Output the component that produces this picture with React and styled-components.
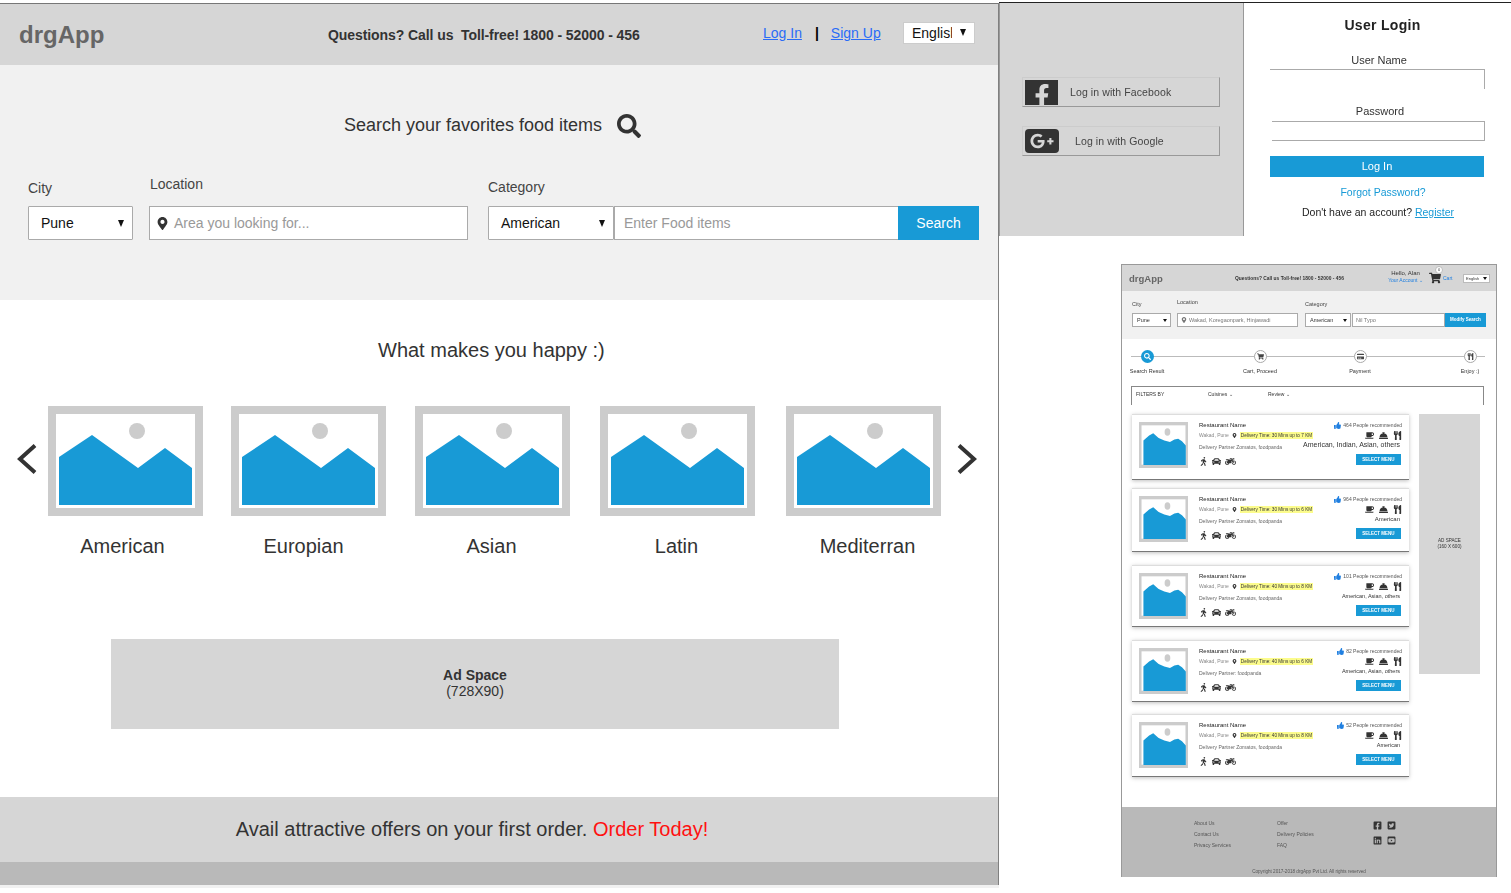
import styled, { createGlobalStyle } from "styled-components";
import {
  FaSearch, FaMapMarkerAlt, FaFacebookF, FaGooglePlusG,
  FaThumbsUp, FaWalking, FaCar, FaMotorcycle, FaCoffee, FaConciergeBell, FaUtensils,
  FaShoppingCart, FaCreditCard, FaFacebookSquare, FaTwitterSquare, FaLinkedin, FaYoutubeSquare,
} from "react-icons/fa";

const GlobalStyle = createGlobalStyle`
  html, body { margin: 0; padding: 0; background: #fff; }
  body { font-family: "Liberation Sans", Arial, sans-serif; color: #333; width: 1511px; height: 893px; overflow: hidden; }
`;

const categories = [
  { name: "American", left: 0, shift: -3 },
  { name: "Europian", left: 28, shift: -5 },
  { name: "Asian", left: 29, shift: -1 },
  { name: "Latin", left: 30, shift: -1 },
  { name: "Mediterran", left: 31, shift: 4 },
];

const restaurants = [
  { count: "464 People recommended", cuisine: "American, Indian, Asian, others", time: "Delivery Time: 30 Mins up to 7 KM", partner: "Delivery Partner Zomatos, foodpanda", height: 66, top: 0, cuisineSize: 7 },
  { count: "964 People recommended", cuisine: "American", time: "Delivery Time: 30 Mins up to 6 KM", partner: "Delivery Partner Zomatos, foodpanda", height: 64, top: 8, cuisineSize: 6 },
  { count: "101 People recommended", cuisine: "American, Asian, others", time: "Delivery Time: 40 Mins up to 8 KM", partner: "Delivery Partner Zomatos, foodpanda", height: 62, top: 13, cuisineSize: 5.5 },
  { count: "82 People recommended", cuisine: "American, Asian, others", time: "Delivery Time: 40 Mins up to 6 KM", partner: "Delivery Partner: foodpanda", height: 62, top: 13, cuisineSize: 5.5 },
  { count: "52 People recommended", cuisine: "American", time: "Delivery Time: 40 Mins up to 8 KM", partner: "Delivery Partner Zomatos, foodpanda", height: 63, top: 12, cuisineSize: 5.5 },
];

const steps = [
  { label: "Search Result", Icon: FaSearch, on: true, left: 0 },
  { label: "Cart, Proceed", Icon: FaShoppingCart, left: 79 },
  { label: "Payment", Icon: FaCreditCard, left: 66 },
  { label: "Enjoy :)", Icon: FaUtensils, left: 76 },
];

function Placeholder({ small }) {
  return (
    <svg viewBox="0 0 155 110" width="100%" height="100%" preserveAspectRatio="none">
      <rect width="155" height="110" fill="#cccccc" />
      <rect x="8" y="8" width="139" height="94" fill="#fff" />
      <circle cx={small ? 90 : 89} cy={small ? 24 : 25} r={small ? 9 : 8} fill="#cccccc" />
      <path
        d={small
          ? "M14 44 L32 32 L45 27 L62 38 L80 44 L98 48 L112 42 L124 40 L136 46 L148 56 V103 H14 Z"
          : "M11 51 L44 29 L90 62 L117 42 L144 62 V99 H11 Z"}
        fill="#189ad6"
      />
    </svg>
  );
}

function Chevron({ right }) {
  return (
    <svg width="20" height="30" viewBox="0 0 20 30" fill="none" stroke="#333" strokeWidth="4">
      <path d={right ? "M2 1.5 L17 15 L2 28.5" : "M18 1.5 L3 15 L18 28.5"} />
    </svg>
  );
}

export default function App() {
  return (
    <>
      <GlobalStyle />
      <Page>
        <Landing>
          <TopBar>
            <Logo>drgApp</Logo>
            <Phone>Questions? Call us&nbsp; Toll-free! 1800 - 52000 - 456</Phone>
            <TopLinks>
              <a href="#login">Log In</a>
              <Pipe>|</Pipe>
              <a href="#signup">Sign Up</a>
            </TopLinks>
            <LangBox>
              <LangText>English</LangText>
              <Caret />
            </LangBox>
          </TopBar>

          <Hero>
            <HeroTitle>
              Search your favorites food items
              <FaSearch size={24} />
            </HeroTitle>
            <SearchRow>
              <Field $width={105} $gap={16}>
                <FieldLabel $bottom={10}>City</FieldLabel>
                <SelectBox>Pune<Caret /></SelectBox>
              </Field>
              <Field $width={319} $gap={20}>
                <FieldLabel $bottom={14} $indent={1}>Location</FieldLabel>
                <InputBox>
                  <FaMapMarkerAlt size={13} color="#333" />
                  <Hint>Area you looking for...</Hint>
                </InputBox>
              </Field>
              <Field $width={126} $gap={0}>
                <FieldLabel $bottom={11}>Category</FieldLabel>
                <SelectBox>American<Caret /></SelectBox>
              </Field>
              <FoodInput><Hint>Enter Food items</Hint></FoodInput>
              <SearchButton>Search</SearchButton>
            </SearchRow>
          </Hero>

          <Happy>
            <HappyTitle>What makes you happy :)</HappyTitle>
            <Carousel>
              <Chevron />
              <Thumbs>
                {categories.map((c) => (
                  <Thumb key={c.name} $left={c.left}>
                    <ThumbImage><Placeholder /></ThumbImage>
                    <ThumbName $shift={c.shift}>{c.name}</ThumbName>
                  </Thumb>
                ))}
              </Thumbs>
              <Chevron right />
            </Carousel>
            <AdBanner>
              <strong>Ad Space</strong>
              <span>(728X90)</span>
            </AdBanner>
          </Happy>

          <Promo>Avail attractive offers on your first order.&nbsp;<b>Order Today!</b></Promo>
          <BottomStrip />
        </Landing>

        <SideColumn>
          <LoginPanel>
            <SocialSide>
              <SocialButton>
                <FbIcon><FaFacebookF size={24} color="#d6d6d6" /></FbIcon>
                <span>Log in with Facebook</span>
              </SocialButton>
              <SocialButton $lower>
                <GoogleIcon><FaGooglePlusG size={24} color="#d6d6d6" /></GoogleIcon>
                <span>Log in with Google</span>
              </SocialButton>
            </SocialSide>
            <LoginForm>
              <LoginTitle>User Login</LoginTitle>
              <LoginLabel $top={20}>User Name</LoginLabel>
              <LoginInput $open />
              <LoginLabel $top={16} $indent={1}>Password</LoginLabel>
              <LoginInput />
              <LoginButton>Log In</LoginButton>
              <Forgot>Forgot Password?</Forgot>
              <Signup>Don't have an account? <a href="#register">Register</a></Signup>
            </LoginForm>
          </LoginPanel>

          <Mini>
            <MiniHeader>
              <MiniLogo>drgApp</MiniLogo>
              <MiniPhone>Questions? Call us Toll-free! 1800 - 52000 - 456</MiniPhone>
              <MiniUser>Hello, Alan<small>Your Account ⌄</small></MiniUser>
              <MiniCart>
                <FaShoppingCart size={12} color="#333" />
                <CartBadge>0</CartBadge>
                <span>Cart</span>
              </MiniCart>
              <MiniLang>English<Caret $tiny /></MiniLang>
            </MiniHeader>

            <MiniSearch>
              <MiniField $width={39} $gap={6} $bottom={6}>
                <label>City</label>
                <MiniSelect>Pune<Caret $tiny /></MiniSelect>
              </MiniField>
              <MiniField $width={121} $gap={7} $bottom={8}>
                <label>Location</label>
                <MiniInput><FaMapMarkerAlt size={6} />Wakad, Koregaonpark, Hinjawadi</MiniInput>
              </MiniField>
              <MiniField $width={46} $gap={1} $bottom={6}>
                <label>Category</label>
                <MiniSelect>American<Caret $tiny /></MiniSelect>
              </MiniField>
              <MiniInput $food>Nil Typo</MiniInput>
              <MiniSearchBtn>Modify Search</MiniSearchBtn>
            </MiniSearch>

            <Steps>
              {steps.map(({ label, Icon, on, left }) => (
                <Step key={label} $left={left}>
                  <StepDot $on={on}><Icon size={7} /></StepDot>
                  <StepLabel>{label}</StepLabel>
                </Step>
              ))}
            </Steps>

            <FilterBar>
              <span>FILTERS BY</span>
              <span>Cuisines ⌄</span>
              <span>Review ⌄</span>
            </FilterBar>

            <MiniBody>
              <CardList>
                {restaurants.map((r) => (
                  <Card key={r.count} $height={r.height} $top={r.top}>
                    <CardThumb><Placeholder small /></CardThumb>
                    <CardInfo>
                      <CardName>Restaurant Name</CardName>
                      <CardPlace>
                        Wakad, Pune <FaMapMarkerAlt size={5} color="#333" />
                        <Highlight>{r.time}</Highlight>
                      </CardPlace>
                      <CardPartner>{r.partner}</CardPartner>
                      <IconRow>
                        <FaWalking size={9} /><FaCar size={9} /><FaMotorcycle size={11} />
                      </IconRow>
                    </CardInfo>
                    <CardSide>
                      <Recommend><FaThumbsUp size={7} color="#1f7fe0" />{r.count}</Recommend>
                      <IconRow $end>
                        <FaCoffee size={9} /><FaConciergeBell size={9} /><FaUtensils size={9} />
                      </IconRow>
                      <Cuisine $size={r.cuisineSize}>{r.cuisine}</Cuisine>
                      <SelectMenu>SELECT MENU</SelectMenu>
                    </CardSide>
                  </Card>
                ))}
              </CardList>
              <Skyscraper>
                <span>AD SPACE</span>
                <span>(160 X 600)</span>
              </Skyscraper>
            </MiniBody>

            <MiniFooter>
              <FooterColumns>
                <FooterLinks>
                  <span>About Us</span><span>Contact Us</span><span>Privacy Services</span>
                </FooterLinks>
                <FooterLinks>
                  <span>Offer</span><span>Delivery Policies</span><span>FAQ</span>
                </FooterLinks>
                <SocialGrid>
                  <FaFacebookSquare size={9} /><FaTwitterSquare size={9} />
                  <FaLinkedin size={9} /><FaYoutubeSquare size={9} />
                </SocialGrid>
              </FooterColumns>
              <Copyright>Copyright 2017-2018 drgApp Pvt Ltd. All rights reserved</Copyright>
            </MiniFooter>
          </Mini>
        </SideColumn>
      </Page>
    </>
  );
}

const Page = styled.div`
  display: flex;
  align-items: flex-start;
  width: 1511px;
  height: 893px;
  overflow: hidden;
`;

const Landing = styled.main`
  width: 998px;
  height: 881px;
  margin-top: 3px;
  border-top: 1px solid #777;
  border-right: 1px solid #808080;
  display: flex;
  flex-direction: column;
  box-shadow: 0 3px 0 #f1f1f1;
  flex: none;
`;

const TopBar = styled.header`
  height: 61px;
  flex: none;
  background: #d6d6d6;
  display: flex;
  align-items: center;
  padding-left: 19px;
`;

const Logo = styled.div`
  width: 309px;
  font-size: 24px;
  font-weight: 700;
  color: #666;
`;

const Phone = styled.div`
  width: 435px;
  font-size: 14px;
  font-weight: 700;
  letter-spacing: -0.08px;
  color: #333;
`;

const TopLinks = styled.div`
  display: flex;
  align-items: center;
  font-size: 14px;
  margin-top: -4px;
  width: 140px;
  a { color: #2a6cf6; }
`;

const Pipe = styled.span`
  margin: 0 12px 0 13px;
  color: #000;
  font-weight: 700;
`;

const Caret = styled.i`
  flex: none;
  width: 0;
  height: 0;
  margin-left: auto;
  border-left: ${(p) => (p.$tiny ? 2 : 3.5)}px solid transparent;
  border-right: ${(p) => (p.$tiny ? 2 : 3.5)}px solid transparent;
  border-top: ${(p) => (p.$tiny ? 3 : 7)}px solid #111;
`;

const LangBox = styled.div`
  box-sizing: border-box;
  width: 72px;
  height: 22px;
  margin-top: -4px;
  background: #fff;
  border: 1px solid #ccc;
  display: flex;
  align-items: center;
  padding: 0 8px;
  font-size: 14px;
  color: #111;
`;

const LangText = styled.span`
  width: 40px;
  overflow: hidden;
  white-space: nowrap;
`;

const Hero = styled.section`
  height: 235px;
  flex: none;
  box-sizing: border-box;
  background: #f1f1f1;
  padding: 47px 19px 0 28px;
`;

const HeroTitle = styled.h2`
  margin: 0 0 0 316px;
  height: 26px;
  display: flex;
  align-items: center;
  gap: 15px;
  font-size: 18px;
  font-weight: 400;
  color: #333;
  svg { margin-top: 1px; }
`;

const SearchRow = styled.div`
  display: flex;
  align-items: flex-end;
  margin-top: 38px;
`;

const Field = styled.div`
  width: ${(p) => p.$width}px;
  margin-right: ${(p) => p.$gap}px;
  flex: none;
`;

const FieldLabel = styled.div`
  font-size: 14px;
  color: #444;
  margin-bottom: ${(p) => p.$bottom}px;
  padding-left: ${(p) => p.$indent || 0}px;
`;

const SelectBox = styled.div`
  box-sizing: border-box;
  height: 34px;
  background: #fff;
  border: 1px solid #aaa;
  border-radius: 1px;
  display: flex;
  align-items: center;
  padding: 0 8px 0 12px;
  font-size: 14px;
  color: #111;
`;

const InputBox = styled.div`
  box-sizing: border-box;
  height: 34px;
  background: #fff;
  border: 1px solid #aaa;
  display: flex;
  align-items: center;
  gap: 5px;
  padding-left: 6px;
`;

const Hint = styled.span`
  font-size: 14px;
  color: #999;
`;

const FoodInput = styled.div`
  box-sizing: border-box;
  width: 284px;
  height: 34px;
  background: #fff;
  border: 1px solid #aaa;
  border-right: 0;
  display: flex;
  align-items: center;
  padding-left: 9px;
`;

const SearchButton = styled.button`
  width: 81px;
  height: 34px;
  border: 0;
  padding: 0;
  background: #189ad6;
  color: #fff;
  font: 14px "Liberation Sans", Arial, sans-serif;
`;

const Happy = styled.section`
  flex: 1;
  background: #fff;
`;

const HappyTitle = styled.h2`
  margin: 0;
  padding: 39px 0 0 378px;
  font-size: 20px;
  line-height: 23px;
  font-weight: 400;
  color: #333;
`;

const Carousel = styled.div`
  display: flex;
  align-items: flex-start;
  margin-top: 44px;
  padding-left: 17px;
  & > svg { flex: none; margin-top: 38px; }
`;

const Thumbs = styled.div`
  display: flex;
  margin: 0 16px 0 11px;
`;

const Thumb = styled.div`
  width: 155px;
  margin-left: ${(p) => p.$left}px;
`;

const ThumbImage = styled.div`
  height: 110px;
  svg { display: block; margin: 0; }
`;

const ThumbName = styled.div`
  margin-top: 19px;
  text-align: center;
  font-size: 20px;
  line-height: 23px;
  color: #333;
  transform: translateX(${(p) => p.$shift}px);
`;

const AdBanner = styled.div`
  box-sizing: border-box;
  width: 728px;
  height: 90px;
  margin: 81px 0 0 111px;
  padding-top: 28px;
  background: #d6d6d6;
  display: flex;
  flex-direction: column;
  align-items: center;
  font-size: 14px;
  line-height: 16px;
  color: #333;
`;

const Promo = styled.div`
  height: 65px;
  flex: none;
  background: #d6d6d6;
  display: flex;
  align-items: center;
  justify-content: center;
  padding-right: 54px;
  font-size: 20px;
  color: #333;
  b { font-weight: 400; color: #f11; }
`;

const BottomStrip = styled.div`
  height: 23px;
  flex: none;
  background: #b9b9b9;
`;

const SideColumn = styled.div`
  flex: 1;
  margin-top: 2px;
  border-top: 1px solid #222;
  min-width: 0;
`;

const LoginPanel = styled.section`
  display: flex;
  height: 233px;
`;

const SocialSide = styled.div`
  box-sizing: border-box;
  width: 245px;
  background: #d6d6d6;
  border-left: 1px solid #999;
  border-right: 1px solid #999;
  padding: 74px 0 0 22px;
  filter: blur(0.3px);
`;

const SocialButton = styled.div`
  box-sizing: border-box;
  width: 198px;
  height: 30px;
  margin-top: ${(p) => (p.$lower ? 19 : 0)}px;
  border: 1px solid #999;
  border-top-color: #ccc;
  border-left-color: #ccc;
  display: flex;
  align-items: center;
  padding-left: 2px;
  font-size: 10.5px;
  letter-spacing: 0.1px;
  color: #444;
  span { margin-left: ${(p) => (p.$lower ? 16 : 12)}px; }
`;

const FbIcon = styled.div`
  width: 33px;
  height: 25px;
  background: #333;
  display: flex;
  align-items: flex-end;
  justify-content: center;
  overflow: hidden;
  svg { margin-bottom: -3px; }
`;

const GoogleIcon = styled.div`
  width: 34px;
  height: 24px;
  background: #333;
  border-radius: 4px;
  display: flex;
  align-items: center;
  justify-content: center;
`;

const LoginForm = styled.div`
  flex: 1;
  padding: 14px 0 0 26px;
  filter: blur(0.25px);
`;

const LoginTitle = styled.h3`
  margin: 0;
  width: 225px;
  text-align: center;
  font-size: 14px;
  line-height: 17px;
  letter-spacing: 0.3px;
  color: #222;
`;

const LoginLabel = styled.div`
  width: ${(p) => 218 + (p.$indent || 0) * 2}px;
  margin-top: ${(p) => p.$top}px;
  text-align: center;
  font-size: 11px;
  line-height: 13px;
  color: #333;
`;

const LoginInput = styled.div`
  box-sizing: border-box;
  width: ${(p) => (p.$open ? 215 : 213)}px;
  height: 20px;
  margin-top: ${(p) => (p.$open ? 2 : 3)}px;
  margin-left: ${(p) => (p.$open ? 0 : 2)}px;
  border-top: 1px solid #aaa;
  border-right: 1px solid #aaa;
  border-bottom: ${(p) => (p.$open ? 0 : "1px solid #aaa")};
`;

const LoginButton = styled.div`
  width: 214px;
  height: 21px;
  margin-top: 15px;
  background: #189ad6;
  color: #fff;
  font-size: 11px;
  line-height: 21px;
  text-align: center;
`;

const Forgot = styled.div`
  width: 226px;
  margin-top: 9px;
  text-align: center;
  font-size: 10.5px;
  line-height: 12px;
  color: #189ad6;
`;

const Signup = styled.div`
  width: 216px;
  margin-top: 8px;
  text-align: center;
  font-size: 10.5px;
  line-height: 12px;
  color: #222;
  white-space: nowrap;
  a { color: #189ad6; }
`;

const Mini = styled.section`
  box-sizing: border-box;
  width: 376px;
  height: 613px;
  margin: 28px 0 0 122px;
  border: 1px solid #999;
  border-bottom: 0;
  background: #fff;
  display: flex;
  flex-direction: column;
  filter: blur(0.35px);
`;

const MiniHeader = styled.div`
  height: 26px;
  flex: none;
  background: #d6d6d6;
  display: flex;
  align-items: center;
  padding-left: 7px;
`;

const MiniLogo = styled.div`
  width: 106px;
  font-size: 9.5px;
  font-weight: 700;
  color: #666;
`;

const MiniPhone = styled.div`
  width: 147px;
  font-size: 4.9px;
  font-weight: 700;
  color: #333;
  white-space: nowrap;
`;

const MiniUser = styled.div`
  width: 47px;
  margin-top: -4px;
  font-size: 6px;
  line-height: 8px;
  text-align: center;
  small { display: block; font-size: 5px; line-height: 6px; color: #1f7fe0; }
`;

const MiniCart = styled.div`
  position: relative;
  width: 34px;
  display: flex;
  align-items: center;
  gap: 2px;
  font-size: 5px;
  color: #1f7fe0;
`;

const CartBadge = styled.i`
  position: absolute;
  top: -6px;
  left: 6px;
  width: 8px;
  height: 8px;
  border: 1px solid #bbb;
  border-radius: 50%;
  background: #fff;
  box-sizing: border-box;
  font-size: 4px;
  font-style: normal;
  line-height: 6px;
  text-align: center;
  color: #333;
`;

const MiniLang = styled.div`
  box-sizing: border-box;
  width: 27px;
  height: 9px;
  background: #fff;
  border: 1px solid #bbb;
  display: flex;
  align-items: center;
  padding: 0 2px;
  font-size: 4px;
`;

const MiniSearch = styled.div`
  height: 48px;
  flex: none;
  box-sizing: border-box;
  background: #f1f1f1;
  display: flex;
  align-items: flex-end;
  padding: 0 0 12px 10px;
`;

const MiniField = styled.div`
  width: ${(p) => p.$width}px;
  margin-right: ${(p) => p.$gap}px;
  label { display: block; font-size: 5.5px; margin-bottom: ${(p) => p.$bottom}px; color: #444; }
`;

const MiniSelect = styled.div`
  box-sizing: border-box;
  height: 14px;
  background: #fff;
  border: 1px solid #aaa;
  display: flex;
  align-items: center;
  padding: 0 3px 0 4px;
  font-size: 5.5px;
`;

const MiniInput = styled.div`
  box-sizing: border-box;
  height: 14px;
  width: ${(p) => (p.$food ? "93px" : "auto")};
  background: #fff;
  border: 1px solid #aaa;
  display: flex;
  align-items: center;
  gap: 2px;
  padding-left: 3px;
  font-size: 5.5px;
  color: #777;
  white-space: nowrap;
`;

const MiniSearchBtn = styled.div`
  width: 41px;
  height: 14px;
  background: #189ad6;
  color: #fff;
  font-size: 4.5px;
  font-weight: 700;
  line-height: 14px;
  text-align: center;
`;

const Steps = styled.div`
  position: relative;
  flex: none;
  height: 47px;
  box-sizing: border-box;
  padding: 11px 0 0 8px;
  display: flex;
  &::before {
    content: "";
    position: absolute;
    top: 17px;
    left: 9px;
    right: 11px;
    height: 1px;
    background: #bbb;
  }
`;

const Step = styled.div`
  position: relative;
  display: flex;
  flex-direction: column;
  align-items: center;
  width: 34px;
  margin-left: ${(p) => p.$left}px;
`;

const StepDot = styled.div`
  width: 13px;
  height: 13px;
  border-radius: 50%;
  display: flex;
  align-items: center;
  justify-content: center;
  background: ${(p) => (p.$on ? "#189ad6" : "#fff")};
  color: ${(p) => (p.$on ? "#fff" : "#444")};
  border: ${(p) => (p.$on ? "0" : "1px solid #aaa")};
  box-sizing: border-box;
`;

const StepLabel = styled.div`
  margin-top: 5px;
  font-size: 5.5px;
  white-space: nowrap;
  color: #333;
`;

const FilterBar = styled.div`
  flex: none;
  box-sizing: border-box;
  width: 353px;
  height: 19px;
  margin-left: 9px;
  border: 1px solid #888;
  border-bottom: 0;
  display: grid;
  grid-template-columns: 72px 60px auto;
  padding: 4px 0 0 4px;
  font-size: 5px;
  color: #333;
`;

const MiniBody = styled.div`
  flex: none;
  height: 402px;
  box-sizing: border-box;
  padding: 9px 0 0 10px;
  display: flex;
  align-items: flex-start;
  gap: 10px;
`;

const CardList = styled.div`
  width: 277px;
  flex: none;
`;

const Card = styled.article`
  box-sizing: border-box;
  height: ${(p) => p.$height}px;
  margin-top: ${(p) => p.$top}px;
  padding: 7px 7px 0;
  border-top: 1px solid #ddd;
  border-bottom: 1px solid #777;
  box-shadow: 0 1px 4px rgba(0, 0, 0, 0.25);
  display: flex;
  background: #fff;
`;

const CardThumb = styled.div`
  width: 49px;
  height: 46px;
  flex: none;
  svg { display: block; }
`;

const CardInfo = styled.div`
  width: 135px;
  margin-left: 11px;
  flex: none;
`;

const CardName = styled.div`
  margin-top: -1px;
  font-size: 6px;
  color: #222;
  line-height: 8px;
`;

const CardPlace = styled.div`
  display: flex;
  align-items: center;
  gap: 3px;
  margin-top: 3px;
  font-size: 5px;
  line-height: 7px;
  color: #888;
  white-space: nowrap;
`;

const Highlight = styled.span`
  background: #fcfc8c;
  color: #333;
  padding: 0 1px;
  font-size: 4.7px;
`;

const CardPartner = styled.div`
  margin-top: 5px;
  font-size: 5px;
  line-height: 7px;
  color: #666;
  white-space: nowrap;
`;

const IconRow = styled.div`
  display: flex;
  align-items: center;
  justify-content: ${(p) => (p.$end ? "flex-end" : "flex-start")};
  gap: ${(p) => (p.$end ? 5 : 4)}px;
  margin-top: ${(p) => (p.$end ? 2 : 5)}px;
  color: #333;
`;

const CardSide = styled.div`
  flex: 1;
  min-width: 0;
  display: flex;
  flex-direction: column;
  align-items: flex-end;
`;

const Recommend = styled.div`
  display: flex;
  align-items: center;
  gap: 2px;
  font-size: 5px;
  line-height: 7px;
  white-space: nowrap;
  color: #555;
`;

const Cuisine = styled.div`
  margin-top: 1px;
  margin-right: 2px;
  font-size: ${(p) => p.$size}px;
  line-height: 8px;
  white-space: nowrap;
  color: #333;
`;

const SelectMenu = styled.div`
  width: 45px;
  height: 11px;
  margin: 5px 1px 0 0;
  background: #189ad6;
  color: #fff;
  font-size: 4.5px;
  font-weight: 700;
  line-height: 11px;
  text-align: center;
`;

const Skyscraper = styled.aside`
  width: 61px;
  height: 260px;
  background: #d6d6d6;
  display: flex;
  flex-direction: column;
  align-items: center;
  justify-content: center;
  font-size: 4.6px;
  line-height: 6px;
  color: #333;
`;

const MiniFooter = styled.footer`
  flex: 1;
  background: #b9b9b9;
  padding-top: 13px;
`;

const FooterColumns = styled.div`
  display: flex;
  padding-left: 72px;
  height: 49px;
`;

const FooterLinks = styled.div`
  width: 83px;
  display: flex;
  flex-direction: column;
  gap: 5px;
  font-size: 5px;
  line-height: 6px;
  color: #555;
  &:nth-child(2) { width: 96px; }
`;

const SocialGrid = styled.div`
  display: grid;
  grid-template-columns: 9px 9px;
  gap: 6px 5px;
  height: 24px;
  margin-top: 1px;
  color: #333;
`;

const Copyright = styled.div`
  text-align: center;
  font-size: 4.6px;
  color: #555;
`;
